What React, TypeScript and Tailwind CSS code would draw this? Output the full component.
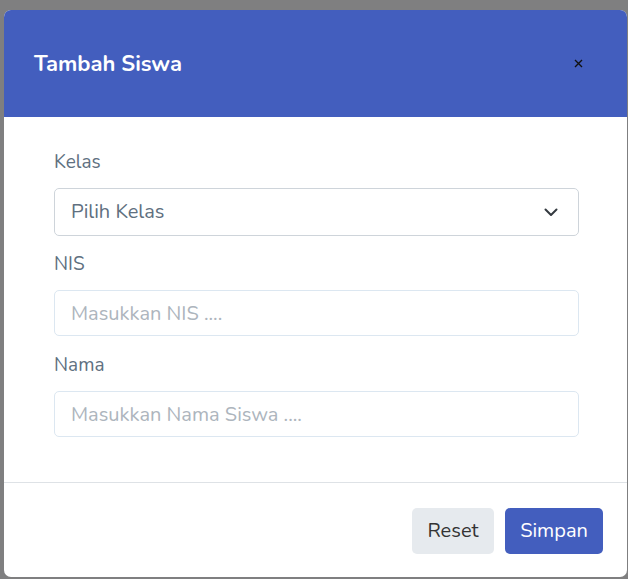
export default function App() {
  return (
    <div className="w-[628px] h-[579px] overflow-hidden bg-[#7f7f80] pt-[10px] pl-[4px] font-['Nunito','Lato','Noto_Sans',sans-serif]">
      <div className="w-[623px] h-[567px] rounded-[7px] bg-white overflow-hidden flex flex-col">
        <div className="h-[107px] shrink-0 bg-[#435ebe] flex items-center justify-between pl-[30px] pr-[44px]">
          <h5 className="text-white text-[22px] font-bold leading-none">Tambah Siswa</h5>
          <button className="w-[10px] h-[10px] flex items-center justify-center">
            <svg width="9" height="9" viewBox="0 0 9 9" fill="none" stroke="#111" strokeWidth="1.4">
              <path d="M1 1l7 7M8 1L1 8" />
            </svg>
          </button>
        </div>

        <div className="flex-1 flex flex-col pl-[50px] pr-[48px] pt-[33px]">
          <label className="text-[19px] leading-[24px] text-[#607080] mb-[14px]">Kelas</label>
          <div className="h-[48px] border border-[#ced4da] rounded-[5px] flex items-center justify-between pl-[16px] pr-[20px]">
            <span className="text-[20px] text-[#607080]">Pilih Kelas</span>
            <svg width="14" height="9" viewBox="0 0 14 9" fill="none" stroke="#343a40" strokeWidth="2" strokeLinecap="round" strokeLinejoin="round">
              <path d="M1.5 1.5l5.5 5.5 5.5-5.5" />
            </svg>
          </div>

          <label className="text-[19px] leading-[24px] text-[#607080] mt-[16px] mb-[14px]">NIS</label>
          <input
            className="h-[46px] border border-[#dce7f1] rounded-[5px] px-[16px] text-[20px] text-[#607080] placeholder:text-[#adb5bd] outline-none"
            placeholder="Masukkan NIS ...."
          />

          <label className="text-[19px] leading-[24px] text-[#607080] mt-[17px] mb-[14px]">Nama</label>
          <input
            className="h-[46px] border border-[#dce7f1] rounded-[5px] px-[16px] text-[20px] text-[#607080] placeholder:text-[#adb5bd] outline-none"
            placeholder="Masukkan Nama Siswa ...."
          />
        </div>

        <div className="h-[95px] shrink-0 border-t border-[#dee2e6] flex items-start justify-end gap-[11px] pt-[25px] pr-[24px]">
          <button className="h-[46px] w-[82px] rounded-[5px] bg-[#e6eaee] text-[20px] text-[#333]">Reset</button>
          <button className="h-[46px] w-[98px] rounded-[5px] bg-[#435ebe] text-[20px] text-white">Simpan</button>
        </div>
      </div>
    </div>
  );
}
